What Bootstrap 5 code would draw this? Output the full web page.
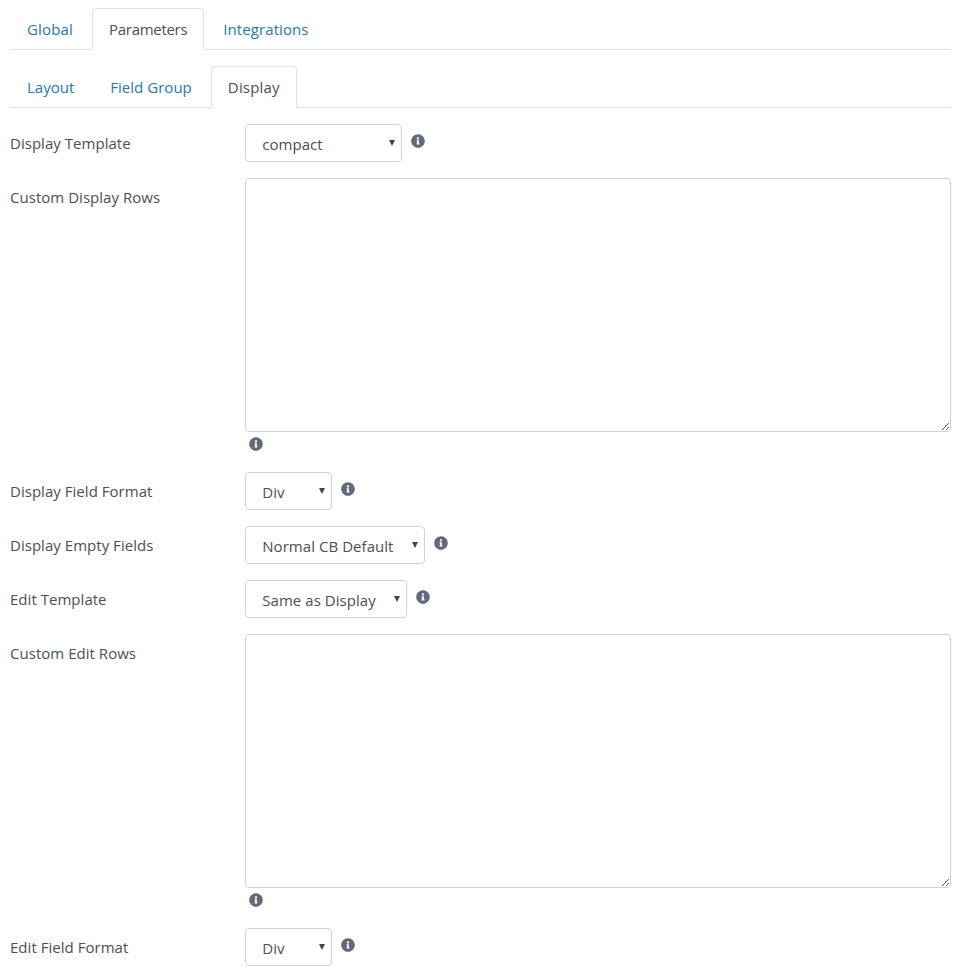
<!DOCTYPE html>
<html lang="en">
<head>
<meta charset="utf-8">
<title>Display parameters</title>
<link href="https://cdn.jsdelivr.net/npm/bootstrap@5.3.0/dist/css/bootstrap.min.css" rel="stylesheet">
<style>
body { font-family: "Open Sans", "Noto Sans", sans-serif; font-size: 15px; line-height: 24px; color: #495057; background: #fff; }
.page-wrap { padding: 8px 10px 0; }
.nav-tabs { --bs-nav-tabs-border-color: #dee2e6; --bs-nav-tabs-link-active-color: #495057; --bs-nav-tabs-link-active-border-color: #dee2e6 #dee2e6 #fff; --bs-nav-tabs-border-radius: 4px; --bs-nav-link-color: #2479b3; --bs-nav-link-hover-color: #2479b3; --bs-nav-link-padding-x: 16px; --bs-nav-link-padding-y: 8px; --bs-nav-link-font-size: 15px; gap: 2px; }
.tab-wide { letter-spacing: .17px; }
.tab-slight { letter-spacing: .09px; }
.tab-faint { letter-spacing: .03px; }
.tab-tight { letter-spacing: -.3px; }
.field-label { padding: 7px 0 0; margin: 0; line-height: 24px; color: #495057; letter-spacing: .03px; }
.pick { height: 38px; padding: 2px 24px 0 16px; font-size: 15px; line-height: 24px; letter-spacing: .05px; color: #495057; border-color: #ced4da; border-radius: 4px; background-image: url("data:image/svg+xml,%3Csvg xmlns='http://www.w3.org/2000/svg' width='6' height='6'%3E%3Cpath d='M0 0h6L3 6z' fill='%23444'/%3E%3C/svg%3E"); background-size: 6px 6px; background-position: right 6px center; }
.pick-compact { width: 157px; }
.pick-div { width: 87px; }
.pick-normal { width: 180px; }
.pick-same { width: 162px; }
.info-mark { width: 14px; height: 14px; fill: #5f6b78; display: block; flex: none; }
.info-side { margin: 10px 0 0 9px; }
.info-line { height: 24px; padding-left: 4px; display: flex; align-items: center; }
.big-text { display: block; width: 100%; height: 254px; border-radius: 4px; border-color: #ced4da; }
</style>
</head>
<body>
<svg width="0" height="0" class="position-absolute">
  <symbol id="info" viewBox="0 0 512 512"><path d="M256 8C119.043 8 8 119.083 8 256c0 136.997 111.043 248 248 248s248-111.003 248-248C504 119.083 392.957 8 256 8zm0 110c23.196 0 42 18.804 42 42s-18.804 42-42 42-42-18.804-42-42 18.804-42 42-42zm56 254c0 6.627-5.373 12-12 12h-88c-6.627 0-12-5.373-12-12v-24c0-6.627 5.373-12 12-12h12v-64h-12c-6.627 0-12-5.373-12-12v-24c0-6.627 5.373-12 12-12h64c6.627 0 12 5.373 12 12v100h12c6.627 0 12 5.373 12 12v24z"/></symbol>
</svg>
<div class="page-wrap">
  <ul class="nav nav-tabs mb-3">
    <li class="nav-item"><a class="nav-link tab-wide" href="#">Global</a></li>
    <li class="nav-item"><a class="nav-link active tab-tight" href="#">Parameters</a></li>
    <li class="nav-item"><a class="nav-link tab-slight" href="#">Integrations</a></li>
  </ul>
  <ul class="nav nav-tabs mb-3">
    <li class="nav-item"><a class="nav-link" href="#">Layout</a></li>
    <li class="nav-item"><a class="nav-link tab-faint" href="#">Field Group</a></li>
    <li class="nav-item"><a class="nav-link active tab-wide" href="#">Display</a></li>
  </ul>

  <div class="row gx-0 mb-3">
    <div class="col-3"><label class="field-label">Display Template</label></div>
    <div class="col-9 d-flex align-items-start">
      <select class="form-select pick pick-compact"><option>compact</option></select>
      <svg class="info-mark info-side"><use href="#info"/></svg>
    </div>
  </div>
  <div class="row gx-0 mb-3">
    <div class="col-3"><label class="field-label">Custom Display Rows</label></div>
    <div class="col-9">
      <textarea class="form-control big-text"></textarea>
      <div class="info-line"><svg class="info-mark"><use href="#info"/></svg></div>
    </div>
  </div>
  <div class="row gx-0 mb-3">
    <div class="col-3"><label class="field-label">Display Field Format</label></div>
    <div class="col-9 d-flex align-items-start">
      <select class="form-select pick pick-div"><option>Div</option></select>
      <svg class="info-mark info-side"><use href="#info"/></svg>
    </div>
  </div>
  <div class="row gx-0 mb-3">
    <div class="col-3"><label class="field-label">Display Empty Fields</label></div>
    <div class="col-9 d-flex align-items-start">
      <select class="form-select pick pick-normal"><option>Normal CB Default</option></select>
      <svg class="info-mark info-side"><use href="#info"/></svg>
    </div>
  </div>
  <div class="row gx-0 mb-3">
    <div class="col-3"><label class="field-label">Edit Template</label></div>
    <div class="col-9 d-flex align-items-start">
      <select class="form-select pick pick-same"><option>Same as Display</option></select>
      <svg class="info-mark info-side"><use href="#info"/></svg>
    </div>
  </div>
  <div class="row gx-0 mb-3">
    <div class="col-3"><label class="field-label">Custom Edit Rows</label></div>
    <div class="col-9">
      <textarea class="form-control big-text"></textarea>
      <div class="info-line"><svg class="info-mark"><use href="#info"/></svg></div>
    </div>
  </div>
  <div class="row gx-0">
    <div class="col-3"><label class="field-label">Edit Field Format</label></div>
    <div class="col-9 d-flex align-items-start">
      <select class="form-select pick pick-div"><option>Div</option></select>
      <svg class="info-mark info-side"><use href="#info"/></svg>
    </div>
  </div>
</div>
<script src="https://cdn.jsdelivr.net/npm/bootstrap@5.3.0/dist/js/bootstrap.bundle.min.js"></script>
</body>
</html>
